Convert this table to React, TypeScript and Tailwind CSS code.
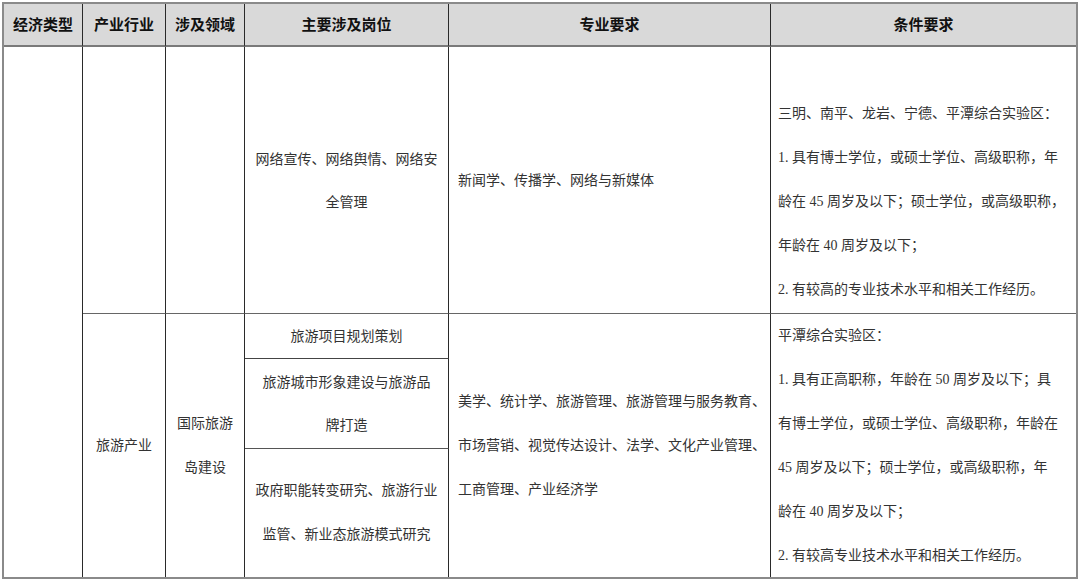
const body = "font-['Liberation_Serif','Noto_Sans_CJK_SC',serif] text-[14px] text-[#333]";
const line = "border-[#2a2a2a]";

const headers = ["经济类型", "产业行业", "涉及领域", "主要涉及岗位", "专业要求", "条件要求"];

function Lines({ items, className = "" }: { items: string[]; className?: string }) {
  return (
    <div className={className}>
      {items.map((t, i) => (
        <div key={i} className="whitespace-nowrap h-[44px] leading-[44px]">
          {t}
        </div>
      ))}
    </div>
  );
}

export default function App() {
  return (
    <div className="w-[1080px] h-[582px] bg-white pt-[2px] pl-[2px]">
      <div className="w-[1076px] h-[577px] border-2 border-[#8a8a8a] grid grid-cols-[79px_83px_79px_204px_322px_305px] grid-rows-[43px_267px_45px_90px_128px]">
        {headers.map((h, i) => (
          <div
            key={h}
            className={`bg-[#d9d9d9] border-b-2 border-b-[#7a7a7a] flex items-center justify-center font-['Noto_Sans_CJK_SC',sans-serif] font-bold text-[15px] text-[#111] ${
              i < 5 ? `border-r ${line}` : ""
            }`}
          >
            {h}
          </div>
        ))}

        {/* 经济类型：两行合并 */}
        <div className={`col-start-1 row-start-2 row-span-4 border-r ${line}`} />

        {/* 第一行 */}
        <div className={`col-start-2 row-start-2 border-r ${line} border-b border-b-[#666]`} />
        <div className={`col-start-3 row-start-2 border-r ${line} border-b border-b-[#666]`} />
        <div className={`col-start-4 row-start-2 border-r ${line} border-b border-b-[#666] flex items-center justify-center ${body}`}>
          <div className="text-center leading-[43px] mt-[1px]">
            <div>网络宣传、网络舆情、网络安</div>
            <div>全管理</div>
          </div>
        </div>
        <div className={`col-start-5 row-start-2 border-r ${line} border-b border-b-[#666] flex items-center pl-[9px] ${body}`}>
          新闻学、传播学、网络与新媒体
        </div>
        <div className={`col-start-6 row-start-2 border-b border-b-[#666] flex flex-col justify-center pl-[7px] ${body}`}>
          <Lines
            items={[
              "",
              "三明、南平、龙岩、宁德、平潭综合实验区：",
              "1. 具有博士学位，或硕士学位、高级职称，年",
              "龄在 45 周岁及以下；硕士学位，或高级职称，",
              "年龄在 40 周岁及以下；",
              "2. 有较高的专业技术水平和相关工作经历。",
            ]}
          />
        </div>

        {/* 第二行：旅游产业 */}
        <div className={`col-start-2 row-start-3 row-span-3 border-r ${line} flex items-center justify-center ${body}`}>
          旅游产业
        </div>
        <div className={`col-start-3 row-start-3 row-span-3 border-r ${line} flex items-center justify-center ${body}`}>
          <Lines items={["国际旅游", "岛建设"]} className="text-center" />
        </div>
        <div className={`col-start-4 row-start-3 border-r ${line} border-b border-b-[#444] flex items-center justify-center ${body}`}>
          旅游项目规划策划
        </div>
        <div className={`col-start-4 row-start-4 border-r ${line} border-b border-b-[#555] flex items-center justify-center ${body}`}>
          <div className="text-center leading-[43px]">
            <div>旅游城市形象建设与旅游品</div>
            <div>牌打造</div>
          </div>
        </div>
        <div className={`col-start-4 row-start-5 border-r ${line} flex items-center justify-center ${body}`}>
          <Lines items={["政府职能转变研究、旅游行业", "监管、新业态旅游模式研究"]} className="text-center" />
        </div>
        <div className={`col-start-5 row-start-3 row-span-3 border-r ${line} flex items-center pl-[9px] ${body}`}>
          <Lines
            items={[
              "美学、统计学、旅游管理、旅游管理与服务教育、",
              "市场营销、视觉传达设计、法学、文化产业管理、",
              "工商管理、产业经济学",
            ]}
          />
        </div>
        <div className={`col-start-6 row-start-3 row-span-3 flex flex-col justify-center pl-[7px] ${body}`}>
          <Lines
            items={[
              "平潭综合实验区：",
              "1. 具有正高职称，年龄在 50 周岁及以下；具",
              "有博士学位，或硕士学位、高级职称，年龄在",
              "45 周岁及以下；硕士学位，或高级职称，年",
              "龄在 40 周岁及以下；",
              "2. 有较高专业技术水平和相关工作经历。",
            ]}
          />
        </div>
      </div>
    </div>
  );
}
